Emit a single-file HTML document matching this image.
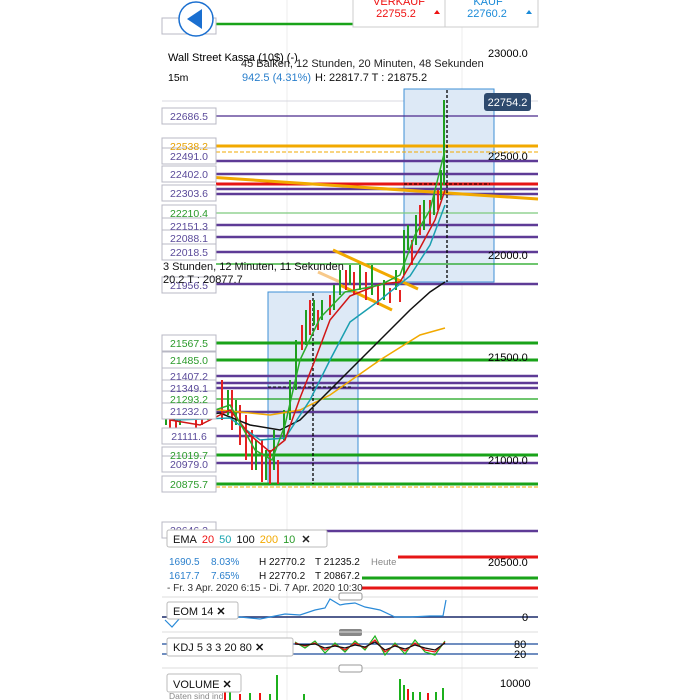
<!DOCTYPE html>
<html><head><meta charset="utf-8"><style>
html,body{margin:0;padding:0;background:#fff;width:700px;height:700px;overflow:hidden}
svg{display:block;font-family:"Liberation Sans",sans-serif}
</style></head><body>
<svg width="700" height="700" viewBox="0 0 700 700" xmlns="http://www.w3.org/2000/svg">
<rect width="700" height="700" fill="#fff"/>
<!-- vertical grid -->
<line x1="287" y1="0" x2="287" y2="700" stroke="#ececec"/>
<line x1="462" y1="0" x2="462" y2="700" stroke="#ececec"/>
<line x1="162" y1="101" x2="538" y2="101" stroke="#d8d8e0"/>

<!-- blue boxes -->
<rect x="404" y="89" width="90" height="193" fill="#dde9f6" stroke="#3d8fd6"/>
<rect x="268" y="292" width="90" height="192" fill="#dde9f6" stroke="#3d8fd6"/>

<!-- horizontal level lines -->
<g fill="none">
<line x1="216" y1="24" x2="353" y2="24" stroke="#19a319" stroke-width="2.5"/>
<line x1="216" y1="116" x2="538" y2="116" stroke="#4b2a8c" stroke-width="1.2"/>
<line x1="216" y1="146" x2="538" y2="146" stroke="#f2a900" stroke-width="3"/>
<line x1="216" y1="152" x2="538" y2="152" stroke="#f2a900" stroke-width="1" stroke-dasharray="4,2"/>
<line x1="216" y1="161" x2="538" y2="161" stroke="#5e3b96" stroke-width="2.5"/>
<line x1="216" y1="174" x2="538" y2="174" stroke="#5e3b96" stroke-width="2.5"/>
<line x1="216" y1="184" x2="538" y2="184" stroke="#e61515" stroke-width="3"/>
<line x1="216" y1="189" x2="538" y2="189" stroke="#5e3b96" stroke-width="2.5"/>
<line x1="216" y1="194" x2="538" y2="194" stroke="#5e3b96" stroke-width="2.5"/>
<line x1="162" y1="174" x2="538" y2="199" stroke="#f2a900" stroke-width="3"/>
<line x1="216" y1="213" x2="538" y2="213" stroke="#7dcb7d" stroke-width="1.2"/>
<line x1="216" y1="225" x2="538" y2="225" stroke="#5e3b96" stroke-width="2.5"/>
<line x1="216" y1="237" x2="538" y2="237" stroke="#5e3b96" stroke-width="2.5"/>
<line x1="216" y1="252" x2="538" y2="252" stroke="#5e3b96" stroke-width="2.5"/>
<line x1="216" y1="264" x2="538" y2="264" stroke="#19a319" stroke-width="1.2"/>
<line x1="216" y1="284" x2="538" y2="284" stroke="#5e3b96" stroke-width="2.5"/>
<line x1="216" y1="343" x2="538" y2="343" stroke="#19a319" stroke-width="3"/>
<line x1="216" y1="360" x2="538" y2="360" stroke="#19a319" stroke-width="3"/>
<line x1="216" y1="376" x2="538" y2="376" stroke="#5e3b96" stroke-width="2.5"/>
<line x1="216" y1="383" x2="538" y2="383" stroke="#5e3b96" stroke-width="2.5"/>
<line x1="216" y1="388" x2="538" y2="388" stroke="#5e3b96" stroke-width="2.5"/>
<line x1="216" y1="399" x2="538" y2="399" stroke="#19a319" stroke-width="1.2"/>
<line x1="216" y1="412" x2="538" y2="412" stroke="#5e3b96" stroke-width="2.5"/>
<line x1="216" y1="436" x2="538" y2="436" stroke="#5e3b96" stroke-width="2.5"/>
<line x1="216" y1="455" x2="538" y2="455" stroke="#19a319" stroke-width="3"/>
<line x1="216" y1="463" x2="538" y2="463" stroke="#5e3b96" stroke-width="2.5"/>
<line x1="216" y1="484" x2="538" y2="484" stroke="#19a319" stroke-width="3"/>
<line x1="216" y1="487" x2="538" y2="487" stroke="#f2a900" stroke-width="1" stroke-dasharray="4,2"/>
<line x1="216" y1="531" x2="538" y2="531" stroke="#5e3b96" stroke-width="2.5"/>
<!-- channel lines -->
<line x1="333" y1="250" x2="418" y2="289" stroke="#f2a900" stroke-width="3"/>
<line x1="340" y1="285" x2="392" y2="310" stroke="#f2a900" stroke-width="3"/>
<line x1="318" y1="272" x2="340" y2="282" stroke="#f7c98a" stroke-width="3"/>
<!-- dashed measures -->
<line x1="447" y1="90" x2="447" y2="282" stroke="#000" stroke-dasharray="3,2" stroke-width="1.3"/>
<line x1="404" y1="184" x2="490" y2="184" stroke="#000" stroke-dasharray="3,2"/>
<line x1="313" y1="293" x2="313" y2="484" stroke="#000" stroke-dasharray="3,2" stroke-width="1.3"/>
<line x1="268" y1="387" x2="352" y2="387" stroke="#000" stroke-dasharray="3,2"/>
</g>

<!-- candles -->
<g stroke-width="2">
<g stroke="#e52222">
<line x1="170" y1="385" x2="170" y2="430"/><line x1="176" y1="395" x2="176" y2="440"/><line x1="184" y1="380" x2="184" y2="420"/>
<line x1="196" y1="375" x2="196" y2="430"/><line x1="202" y1="390" x2="202" y2="425"/><line x1="214" y1="375" x2="214" y2="410"/>
<line x1="222" y1="380" x2="222" y2="420"/><line x1="232" y1="390" x2="232" y2="430"/><line x1="240" y1="405" x2="240" y2="445"/>
<line x1="246" y1="415" x2="246" y2="460"/><line x1="252" y1="430" x2="252" y2="470"/><line x1="262" y1="440" x2="262" y2="482"/>
<line x1="270" y1="450" x2="270" y2="484"/><line x1="278" y1="460" x2="278" y2="484"/>
<line x1="302" y1="325" x2="302" y2="350"/><line x1="310" y1="300" x2="310" y2="335"/><line x1="318" y1="310" x2="318" y2="330"/>
<line x1="330" y1="295" x2="330" y2="315"/><line x1="346" y1="270" x2="346" y2="290"/><line x1="354" y1="272" x2="354" y2="295"/>
<line x1="366" y1="272" x2="366" y2="300"/><line x1="378" y1="285" x2="378" y2="305"/><line x1="390" y1="288" x2="390" y2="303"/>
<line x1="400" y1="290" x2="400" y2="302"/><line x1="412" y1="240" x2="412" y2="265"/><line x1="420" y1="205" x2="420" y2="235"/>
<line x1="430" y1="200" x2="430" y2="225"/><line x1="438" y1="190" x2="438" y2="210"/>
</g>
<g stroke="#1f9f1f">
<line x1="166" y1="400" x2="166" y2="425"/><line x1="180" y1="400" x2="180" y2="425"/><line x1="190" y1="385" x2="190" y2="410"/>
<line x1="208" y1="395" x2="208" y2="420"/><line x1="228" y1="390" x2="228" y2="415"/><line x1="236" y1="400" x2="236" y2="425"/>
<line x1="256" y1="440" x2="256" y2="470"/><line x1="266" y1="450" x2="266" y2="480"/><line x1="274" y1="430" x2="274" y2="470"/>
<line x1="284" y1="410" x2="284" y2="440"/><line x1="290" y1="380" x2="290" y2="420"/><line x1="296" y1="340" x2="296" y2="390"/>
<line x1="306" y1="310" x2="306" y2="345"/><line x1="314" y1="300" x2="314" y2="325"/><line x1="322" y1="300" x2="322" y2="320"/>
<line x1="334" y1="285" x2="334" y2="310"/><line x1="340" y1="270" x2="340" y2="295"/><line x1="350" y1="265" x2="350" y2="285"/>
<line x1="360" y1="265" x2="360" y2="290"/><line x1="372" y1="265" x2="372" y2="295"/><line x1="384" y1="280" x2="384" y2="300"/>
<line x1="396" y1="270" x2="396" y2="290"/><line x1="404" y1="230" x2="404" y2="275"/><line x1="408" y1="225" x2="408" y2="250"/>
<line x1="416" y1="215" x2="416" y2="245"/><line x1="424" y1="200" x2="424" y2="230"/><line x1="434" y1="195" x2="434" y2="215"/>
<line x1="441" y1="170" x2="441" y2="200"/><line x1="444" y1="100" x2="444" y2="185"/>
</g>
</g>
<!-- moving averages -->
<g fill="none" stroke-width="1.5">
<polyline stroke="#f2a900" points="162,403 220,410 270,415 300,410 330,395 380,360 420,335 445,328"/>
<polyline stroke="#111" points="170,420 220,413 250,425 280,430 300,420 320,400 350,370 380,340 410,310 430,292 445,282"/>
<polyline stroke="#1a9fb0" points="175,420 230,418 260,440 285,438 310,400 330,360 350,322 380,300 410,276 430,245 445,205"/>
<polyline stroke="#d01616" points="170,420 200,425 230,410 250,435 270,452 285,440 300,398 315,360 330,320 350,296 380,284 400,282 420,248 435,220 445,190"/>
<polyline stroke="#2bab2b" points="165,415 200,415 230,405 255,450 272,460 285,425 300,360 320,318 345,292 380,285 400,275 415,235 430,210 445,150"/>
</g>

<!-- left price labels -->
<g font-size="10.5" stroke="#b8b8c4" stroke-width="1">
<rect x="162" y="18" width="54" height="16" fill="#fff"/>
<rect x="162" y="108" width="54" height="16" fill="#fff"/>
<rect x="162" y="138" width="54" height="16" fill="#fff"/>
<rect x="162" y="148" width="54" height="16" fill="#fff"/>
<rect x="162" y="166" width="54" height="16" fill="#fff"/>
<rect x="162" y="185" width="54" height="16" fill="#fff"/>
<rect x="162" y="205" width="54" height="16" fill="#fff"/>
<rect x="162" y="218" width="54" height="16" fill="#fff"/>
<rect x="162" y="230" width="54" height="16" fill="#fff"/>
<rect x="162" y="244" width="54" height="16" fill="#fff"/>
<rect x="162" y="277" width="54" height="16" fill="#fff"/>
<rect x="162" y="335" width="54" height="16" fill="#fff"/>
<rect x="162" y="352" width="54" height="16" fill="#fff"/>
<rect x="162" y="368" width="54" height="16" fill="#fff"/>
<rect x="162" y="380" width="54" height="16" fill="#fff"/>
<rect x="162" y="391" width="54" height="16" fill="#fff"/>
<rect x="162" y="403" width="54" height="16" fill="#fff"/>
<rect x="162" y="428" width="54" height="16" fill="#fff"/>
<rect x="162" y="447" width="54" height="16" fill="#fff"/>
<rect x="162" y="456" width="54" height="16" fill="#fff"/>
<rect x="162" y="476" width="54" height="16" fill="#fff"/>
<rect x="162" y="522" width="54" height="16" fill="#fff"/>
</g>
<g font-size="10.5" text-anchor="middle">
<text x="189" y="30" fill="#2a9a2a">2</text>
<text x="189" y="120" fill="#5a4a9a">22686.5</text>
<text x="189" y="150" fill="#e6a000">22538.2</text>
<text x="189" y="160" fill="#5a4a9a">22491.0</text>
<text x="189" y="178" fill="#5a4a9a">22402.0</text>
<text x="189" y="197" fill="#5a4a9a">22303.6</text>
<text x="189" y="217" fill="#2a9a2a">22210.4</text>
<text x="189" y="230" fill="#5a4a9a">22151.3</text>
<text x="189" y="242" fill="#5a4a9a">22088.1</text>
<text x="189" y="256" fill="#5a4a9a">22018.5</text>
<text x="189" y="289" fill="#5a4a9a">21956.5</text>
<text x="189" y="347" fill="#2a9a2a">21567.5</text>
<text x="189" y="364" fill="#2a9a2a">21485.0</text>
<text x="189" y="380" fill="#5a4a9a">21407.2</text>
<text x="189" y="392" fill="#5a4a9a">21349.1</text>
<text x="189" y="403" fill="#2a9a2a">21293.2</text>
<text x="189" y="415" fill="#5a4a9a">21232.0</text>
<text x="189" y="440" fill="#5a4a9a">21111.6</text>
<text x="189" y="459" fill="#2a9a2a">21019.7</text>
<text x="189" y="468" fill="#5a4a9a">20979.0</text>
<text x="189" y="488" fill="#2a9a2a">20875.7</text>
<text x="189" y="534" fill="#5a4a9a">20646.2</text>
</g>

<!-- back button -->
<circle cx="196" cy="19" r="17" fill="#fff" stroke="#1a6fd0" stroke-width="1.5"/>
<polygon points="187,19 202,9 202,29" fill="#1a6fd0"/>

<!-- top buy/sell -->
<rect x="353" y="-2" width="92" height="29" fill="#fff" stroke="#ccc"/>
<rect x="445" y="-2" width="93" height="29" fill="#fff" stroke="#ccc"/>
<text x="399" y="5" font-size="11" fill="#e11" text-anchor="middle">VERKAUF</text>
<text x="396" y="17" font-size="11" fill="#e11" text-anchor="middle">22755.2</text>
<polygon points="434,14 437,10 440,14" fill="#e11"/>
<text x="488" y="5" font-size="11" fill="#1a8ad8" text-anchor="middle">KAUF</text>
<text x="487" y="17" font-size="11" fill="#1a8ad8" text-anchor="middle">22760.2</text>
<polygon points="526,14 529,10 532,14" fill="#1a8ad8"/>

<!-- header texts -->
<text x="241" y="67" font-size="11" fill="#222">45 Balken, 12 Stunden, 20 Minuten, 48 Sekunden</text>
<text x="168" y="61" font-size="11" fill="#000">Wall Street Kassa (10$) (-)</text>
<text x="168" y="81" font-size="10.5" fill="#000">15m</text>
<text x="242" y="81" font-size="11" fill="#2a7fcc">942.5 (4.31%)</text>
<text x="315" y="81" font-size="11" fill="#111">H: 22817.7 T : 21875.2</text>
<text x="488" y="57" font-size="11" fill="#000">23000.0</text>
<text x="488" y="160" font-size="11" fill="#000">22500.0</text>
<text x="488" y="259" font-size="11" fill="#000">22000.0</text>
<text x="488" y="361" font-size="11" fill="#000">21500.0</text>
<text x="488" y="464" font-size="11" fill="#000">21000.0</text>
<text x="163" y="270" font-size="11" fill="#111">3 Stunden, 12 Minuten, 11 Sekunden</text>
<text x="163" y="283" font-size="11" fill="#111">20.2 T : 20877.7</text>
<rect x="484" y="93" width="47" height="18" rx="3" fill="#2e4a6e"/>
<text x="507.5" y="106" font-size="11" fill="#fff" text-anchor="middle">22754.2</text>

<!-- lower panel -->
<line x1="398" y1="557" x2="538" y2="557" stroke="#e61515" stroke-width="3"/>
<line x1="362" y1="578" x2="538" y2="578" stroke="#19a319" stroke-width="3"/>
<line x1="362" y1="588" x2="538" y2="588" stroke="#e61515" stroke-width="3"/>
<rect x="167" y="530" width="160" height="17" rx="2" fill="#fff" stroke="#bbb"/>
<text x="173" y="543" font-size="11"><tspan fill="#111">EMA</tspan><tspan fill="#e11" dx="5">20</tspan><tspan fill="#1aa5b0" dx="5">50</tspan><tspan fill="#111" dx="5">100</tspan><tspan fill="#f2a900" dx="5">200</tspan><tspan fill="#2a9a2a" dx="5">10</tspan><tspan fill="#222" dx="6" font-weight="bold">✕</tspan></text>
<text x="169" y="565" font-size="10" fill="#2a7fcc">1690.5</text>
<text x="211" y="565" font-size="10" fill="#2a7fcc">8.03%</text>
<text x="259" y="565" font-size="10" fill="#111">H 22770.2</text>
<text x="315" y="565" font-size="10" fill="#111">T 21235.2</text>
<text x="371" y="565" font-size="9.5" fill="#888">Heute</text>
<text x="488" y="566" font-size="11" fill="#000">20500.0</text>
<text x="169" y="579" font-size="10" fill="#2a7fcc">1617.7</text>
<text x="211" y="579" font-size="10" fill="#2a7fcc">7.65%</text>
<text x="259" y="579" font-size="10" fill="#111">H 22770.2</text>
<text x="315" y="579" font-size="10" fill="#111">T 20867.2</text>
<text x="167" y="591" font-size="10" fill="#333">- Fr. 3 Apr. 2020 6:15 - Di. 7 Apr. 2020 10:30</text>
<line x1="162" y1="597" x2="538" y2="597" stroke="#ddd"/>
<rect x="339" y="593" width="23" height="7" rx="2" fill="#fff" stroke="#999"/>
<!-- EOM -->
<line x1="162" y1="617" x2="538" y2="617" stroke="#1a2a6a" stroke-width="1.5"/>
<polyline fill="none" stroke="#2a8ad8" stroke-width="1.2" points="165,620 172,627 180,618 240,617 260,619 285,614 300,615 315,610 325,608 330,599 340,605 345,604 355,603 365,607 380,610 395,617 410,617 430,616 443,616 446,600"/>
<rect x="167" y="602" width="71" height="17" rx="2" fill="#fff" stroke="#bbb"/>
<text x="173" y="615" font-size="11" fill="#111">EOM   14  <tspan font-weight="bold">✕</tspan></text>
<text x="522" y="621" font-size="11" fill="#000">0</text>
<rect x="339" y="629" width="23" height="7" rx="2" fill="#888"/>
<line x1="162" y1="632" x2="538" y2="632" stroke="#ddd"/>
<!-- KDJ -->
<line x1="162" y1="644" x2="538" y2="644" stroke="#1a4a9a" stroke-width="1.2"/>
<line x1="162" y1="654" x2="538" y2="654" stroke="#1a4a9a" stroke-width="1.2"/>
<polyline fill="none" stroke="#1cb01c" stroke-width="1.2" points="295,642 305,648 315,641 325,653 335,643 345,652 355,641 365,650 375,636 385,655 395,643 405,654 415,640 425,652 435,655 445,641"/>
<polyline fill="none" stroke="#e11" stroke-width="1.2" points="295,643 305,646 315,643 325,650 335,645 345,650 355,643 365,648 375,640 385,652 395,645 405,651 415,643 425,650 435,652 445,642"/>
<polyline fill="none" stroke="#111" stroke-width="1.2" points="295,644 305,645 315,644 325,648 335,646 345,648 355,645 365,647 375,642 385,650 395,646 405,649 415,645 425,648 435,650 445,643"/>
<rect x="167" y="638" width="126" height="18" rx="2" fill="#fff" stroke="#bbb"/>
<text x="173" y="651" font-size="11" fill="#111">KDJ  5  3  3  20  80  <tspan font-weight="bold">✕</tspan></text>
<text x="514" y="648" font-size="11" fill="#000">80</text>
<text x="514" y="658" font-size="11" fill="#000">20</text>
<line x1="162" y1="668" x2="538" y2="668" stroke="#ddd"/>
<rect x="339" y="665" width="23" height="7" rx="2" fill="#fff" stroke="#999"/>
<!-- volume -->
<g stroke-width="2">
<line x1="225" y1="700" x2="225" y2="692" stroke="#e11"/><line x1="230" y1="700" x2="230" y2="690" stroke="#1cb01c"/>
<line x1="240" y1="700" x2="240" y2="694" stroke="#e11"/><line x1="250" y1="700" x2="250" y2="693" stroke="#1cb01c"/>
<line x1="260" y1="700" x2="260" y2="693" stroke="#e11"/><line x1="270" y1="700" x2="270" y2="694" stroke="#1cb01c"/>
<line x1="277" y1="700" x2="277" y2="675" stroke="#1cb01c"/><line x1="304" y1="700" x2="304" y2="694" stroke="#1cb01c"/>
<line x1="400" y1="700" x2="400" y2="679" stroke="#1cb01c"/><line x1="404" y1="700" x2="404" y2="685" stroke="#1cb01c"/>
<line x1="408" y1="700" x2="408" y2="689" stroke="#e11"/><line x1="413" y1="700" x2="413" y2="692" stroke="#1cb01c"/>
<line x1="420" y1="700" x2="420" y2="692" stroke="#1cb01c"/><line x1="428" y1="700" x2="428" y2="693" stroke="#e11"/>
<line x1="436" y1="700" x2="436" y2="692" stroke="#1cb01c"/><line x1="443" y1="700" x2="443" y2="688" stroke="#1cb01c"/>
</g>
<rect x="167" y="674" width="74" height="18" rx="2" fill="#fff" stroke="#bbb"/>
<text x="173" y="688" font-size="11" fill="#111">VOLUME  <tspan font-weight="bold">✕</tspan></text>
<text x="169" y="699" font-size="8.5" fill="#888">Daten sind ind</text>
<text x="500" y="687" font-size="11" fill="#000">10000</text>
</svg>
</body></html>
